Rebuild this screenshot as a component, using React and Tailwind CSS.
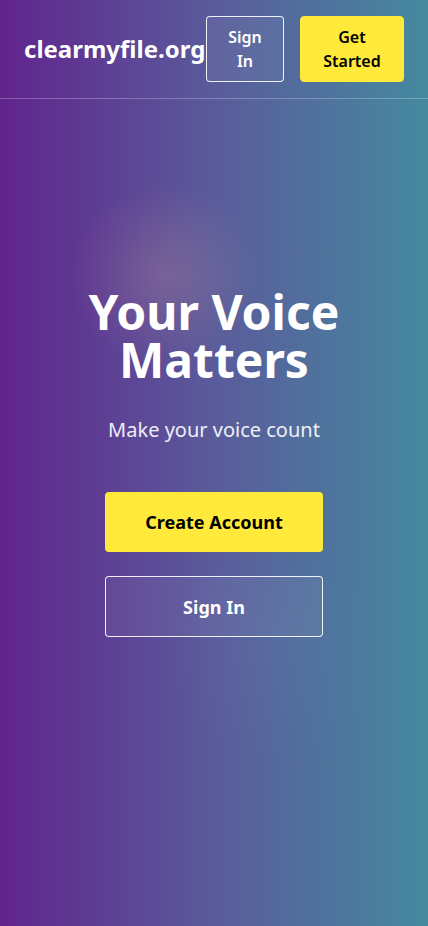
export default function App() {
  return (
    <div
      className="relative min-h-screen w-full overflow-hidden bg-[linear-gradient(90deg,#61248d_0%,#5a5b9b_50%,#45899f_100%)] text-white"
      style={{ fontFamily: '"Noto Sans", "Open Sans", sans-serif' }}
    >
      {/* soft glows */}
      <div className="pointer-events-none absolute left-[70px] top-[180px] h-[190px] w-[190px] rounded-full bg-[radial-gradient(circle,rgba(255,190,150,0.18)_0%,rgba(255,190,150,0.06)_45%,rgba(255,190,150,0)_70%)]" />
      <div className="pointer-events-none absolute left-[160px] top-[540px] h-[220px] w-[220px] rounded-full bg-[radial-gradient(circle,rgba(140,170,220,0.06)_0%,rgba(140,170,220,0.02)_45%,rgba(140,170,220,0)_70%)]" />

      <header className="relative flex items-center justify-between border-b border-white/25 px-6 py-4">
        <span className="text-2xl font-bold leading-8">clearmyfile.org</span>
        <div className="flex gap-4">
          <button className="w-[78px] rounded border border-white/90 bg-white/5 px-2 py-2 text-base font-semibold leading-6">
            Sign
            <br />
            In
          </button>
          <button className="w-[104px] rounded border border-[#ffe93b] bg-[#ffe93b] px-2 py-2 text-base font-semibold leading-6 text-black">
            Get
            <br />
            Started
          </button>
        </div>
      </header>

      <main className="relative flex flex-col items-center px-6 pt-[189px] pb-20 text-center">
        <h1 className="text-5xl font-bold leading-none">
          Your Voice
          <br />
          Matters
        </h1>
        <p className="mt-8 text-xl leading-7 text-white/90">
          Make your voice count
        </p>
        <div className="mt-12 flex w-[218px] flex-col gap-6">
          <button className="rounded bg-[#ffe93b] py-4 text-lg font-bold leading-7 text-black">
            Create Account
          </button>
          <button className="rounded border border-white/90 bg-white/5 py-[15.5px] text-lg font-bold leading-7">
            Sign In
          </button>
        </div>
      </main>
    </div>
  );
}
